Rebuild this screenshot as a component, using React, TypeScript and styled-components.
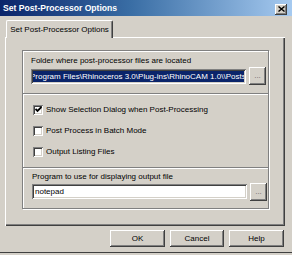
import React from "react";
import styled, { createGlobalStyle } from "styled-components";

const Global = createGlobalStyle`
  html, body { margin: 0; padding: 0; background: #D4D0C8; }
  body { font-family: "Liberation Sans", Arial, sans-serif; }
  * { box-sizing: border-box; }
`;

const Window = styled.div`
  width: 292px;
  height: 253px;
  background: #d4d0c8;
  display: flex;
  flex-direction: column;
  overflow: hidden;
  border-bottom: 1px solid #404040;
`;

const TitleBar = styled.div`
  height: 16px;
  flex: none;
  display: flex;
  align-items: center;
  justify-content: space-between;
  padding: 0 5px 0 3px;
  background: linear-gradient(to right, #0a246a 0%, #3a6ea5 45%, #a6caf0 100%);
`;

const TitleText = styled.span`
  color: #fff;
  font-weight: bold;
  font-size: 8.6px;
  line-height: 16px;
  white-space: nowrap;
`;

const CloseButton = styled.div`
  width: 12px;
  height: 11px;
  margin-top: 2px;
  background: #d4d0c8;
  display: flex;
  align-items: center;
  justify-content: center;
  box-shadow: inset -1px -1px #404040, inset 1px 1px #fff, inset -2px -2px #808080;
`;

const Body = styled.div`
  flex: 1;
  display: flex;
  flex-direction: column;
  padding: 4px 7px 0 5px;
`;

const TabStrip = styled.div`
  height: 17px;
  display: flex;
  align-items: flex-end;
  padding-left: 1px;
`;

const Tab = styled.div`
  position: relative;
  z-index: 1;
  height: 18px;
  margin-bottom: -1px;
  width: 107px;
  background: #d4d0c8;
  border-top-left-radius: 2px;
  border-top-right-radius: 2px;
  border-left: 1px solid #fff;
  border-top: 1px solid #fff;
  border-right: 1px solid #404040;
  box-shadow: inset -1px 0 #808080;
  font-size: 8px;
  color: #000;
  display: flex;
  justify-content: center;
  padding-top: 4px;
  white-space: nowrap;
`;

const Panel = styled.div`
  height: 189px;
  background: #d4d0c8;
  padding: 13px 16px 0 17px;
  box-shadow: inset 1px 1px #fff, inset -1px -1px #404040, inset -2px -2px #808080;
`;

const Frame = styled.div`
  width: 247px;
  border: 1px solid #808080;
  box-shadow: inset 1px 1px #fff, 1px 1px #fff;
  display: flex;
  flex-direction: column;
`;

const Section = styled.div<{ $h: number; $pt: number; $pl: number }>`
  height: ${(p) => p.$h}px;
  padding-top: ${(p) => p.$pt}px;
  padding-left: ${(p) => p.$pl}px;
  display: flex;
  flex-direction: column;
`;

const Separator = styled.div`
  height: 2px;
  flex: none;
  border-top: 1px solid #808080;
  border-bottom: 1px solid #fff;
`;

const Label = styled.div`
  font-size: 8px;
  line-height: 10px;
  color: #000;
  white-space: nowrap;
`;

const FieldRow = styled.div`
  display: flex;
  align-items: flex-start;
  height: 18px;
  gap: 3px;
  margin-top: 1px;
`;

const TextField = styled.div<{ $mt: number }>`
  width: 215px;
  height: 15px;
  margin-top: ${(p) => p.$mt}px;
  background: #fff;
  box-shadow: inset 1px 1px #808080, inset -1px -1px #fff, inset 2px 2px #404040,
    inset -2px -2px #d4d0c8;
  padding: 2px 2px 0 2px;
  overflow: hidden;
  white-space: nowrap;
  font-size: 8px;
  line-height: 11px;
  color: #000;
`;

const Selected = styled.div`
  width: 211px;
  overflow: hidden;
  white-space: nowrap;
  text-indent: -3px;
  background: #0a246a;
  color: #fff;
  line-height: 11px;
`;

const PlainText = styled.span`
  padding-left: 1px;
`;

const BrowseButton = styled.div`
  width: 17px;
  height: 18px;
  flex: none;
  background: #d4d0c8;
  box-shadow: inset -1px -1px #404040, inset 1px 1px #fff, inset -2px -2px #808080;
  font-size: 8px;
  color: #6a6a6a;
  display: flex;
  justify-content: center;
  align-items: flex-end;
  padding-bottom: 5px;
  line-height: 8px;
`;

const CheckRow = styled.div`
  height: 21px;
  display: flex;
  align-items: center;
  gap: 3px;
`;

const Box = styled.div`
  width: 10px;
  height: 10px;
  flex: none;
  background: #fff;
  box-shadow: inset 1px 1px #808080, inset -1px -1px #fff, inset 2px 2px #404040,
    inset -2px -2px #d4d0c8;
  display: flex;
  align-items: center;
  justify-content: center;
`;

const ButtonRow = styled.div`
  display: flex;
  justify-content: flex-end;
  gap: 5px;
  margin-top: 4px;
  padding-right: 1px;
`;

const PushButton = styled.div<{ $w: number }>`
  width: ${(p) => p.$w}px;
  height: 17px;
  background: #d4d0c8;
  box-shadow: inset -1px -1px #404040, inset 1px 1px #fff, inset -2px -2px #808080;
  font-size: 8px;
  color: #000;
  display: flex;
  align-items: center;
  justify-content: center;
`;

const Check = ({ checked, label }: { checked?: boolean; label: string }) => (
  <CheckRow>
    <Box>
      {checked && (
        <svg width="7" height="7" viewBox="0 0 7 7">
          <path d="M0.5 3 L2.5 5 L6.5 1" stroke="#000" strokeWidth="1.8" fill="none" />
        </svg>
      )}
    </Box>
    <Label>{label}</Label>
  </CheckRow>
);

export default function App() {
  return (
    <>
      <Global />
      <Window>
        <TitleBar>
          <TitleText>Set Post-Processor Options</TitleText>
          <CloseButton>
            <svg width="7" height="6" viewBox="0 0 7 6">
              <path d="M0.5 0.5 L6.5 5.5 M6.5 0.5 L0.5 5.5" stroke="#000" strokeWidth="1.4" />
            </svg>
          </CloseButton>
        </TitleBar>
        <Body>
          <TabStrip>
            <Tab>Set Post-Processor Options</Tab>
          </TabStrip>
          <Panel>
            <Frame>
              <Section $h={42} $pt={5} $pl={8}>
                <Label>Folder where post-processor files are located</Label>
                <FieldRow>
                  <TextField $mt={2}>
                    <Selected>Program Files\Rhinoceros 3.0\Plug-ins\RhinoCAM 1.0\\Posts</Selected>
                  </TextField>
                  <BrowseButton>...</BrowseButton>
                </FieldRow>
              </Section>
              <Separator />
              <Section $h={72} $pt={4} $pl={10}>
                <Check checked label="Show Selection Dialog when Post-Processing" />
                <Check label="Post Process in Batch Mode" />
                <Check label="Output Listing Files" />
              </Section>
              <Separator />
              <Section $h={39} $pt={3} $pl={9}>
                <Label>Program to use for displaying output file</Label>
                <FieldRow>
                  <TextField $mt={1}>
                    <PlainText>notepad</PlainText>
                  </TextField>
                  <BrowseButton>...</BrowseButton>
                </FieldRow>
              </Section>
            </Frame>
          </Panel>
          <ButtonRow>
            <PushButton $w={55}>OK</PushButton>
            <PushButton $w={54}>Cancel</PushButton>
            <PushButton $w={55}>Help</PushButton>
          </ButtonRow>
        </Body>
      </Window>
    </>
  );
}
